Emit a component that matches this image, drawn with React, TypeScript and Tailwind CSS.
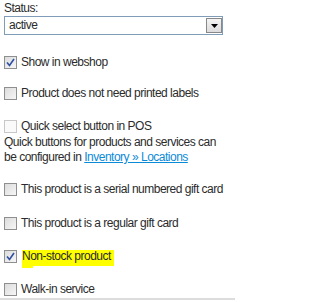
function Box({ checked, light }: { checked?: boolean; light?: boolean }) {
  return (
    <span
      className={`inline-flex w-[13px] h-[13px] shrink-0 items-center justify-center border ${
        light ? "border-[#c8c8c8] bg-[#fafafa]" : "border-[#8e8f8f] bg-gradient-to-br from-[#dcdcdc] to-[#f6f6f6]"
      }`}
    >
      {checked && (
        <svg width="9" height="9" viewBox="0 0 9 9">
          <path d="M1 4.5 L3.5 7.5 L8 1" stroke="#2d4fa3" strokeWidth="1.6" fill="none" />
        </svg>
      )}
    </span>
  );
}

function Row({ label, checked, light, mark }: { label: string; checked?: boolean; light?: boolean; mark?: boolean }) {
  return (
    <div className="relative flex items-center gap-[4px] h-[13px] whitespace-nowrap">
      <Box checked={checked} light={light} />
      {mark && (
        <>
          <span className="absolute left-[18px] top-0 w-[92px] h-[16px] bg-[#ffff00]" />
          <span className="absolute left-[18px] top-[16px] w-[11px] h-[2px] bg-[#ffff00]" />
        </>
      )}
      <span className={mark ? "relative pl-[1px] -mt-[1px]" : ""}>{label}</span>
    </div>
  );
}

export default function App() {
  return (
    <div className="w-[235px] h-[302px] bg-white text-[12px] leading-[15px] tracking-[-0.5px] text-[#2b2b2b] font-['Liberation_Sans',Arial,sans-serif] px-[4px] pt-[1px] relative overflow-hidden">
      <div>Status:</div>
      <div className="w-[219px] h-[19px] border border-[#7f9db9] flex items-center justify-between pl-[4px] pr-0">
        <span>active</span>
        <span className="w-[16px] h-[15px] border border-[#888] bg-gradient-to-b from-[#f4f4f4] to-[#dcdcdc] flex items-center justify-center">
          <svg width="7" height="4" viewBox="0 0 7 4">
            <path d="M0 0 H7 L3.5 4 Z" fill="#000" />
          </svg>
        </span>
      </div>
      <div className="mt-[21px] flex flex-col">
        <Row label="Show in webshop" checked />
        <div className="h-[18px]" />
        <Row label="Product does not need printed labels" />
        <div className="h-[20px]" />
        <Row label="Quick select button in POS" light />
        <p className="mt-[2px]">
          Quick buttons for products and services can be configured in{" "}
          <a href="#" className="text-[#0b8ad8] underline">
            Inventory » Locations
          </a>
        </p>
        <div className="h-[18px]" />
        <Row label="This product is a serial numbered gift card" />
        <div className="h-[21px]" />
        <Row label="This product is a regular gift card" />
        <div className="h-[20px]" />
        <Row label="Non-stock product" checked mark />
        <div className="h-[20px]" />
        <Row label="Walk-in service" />
      </div>
      <div className="absolute left-0 right-0 bottom-[2px] h-[2px] bg-[#dcdcdc]" />
    </div>
  );
}
